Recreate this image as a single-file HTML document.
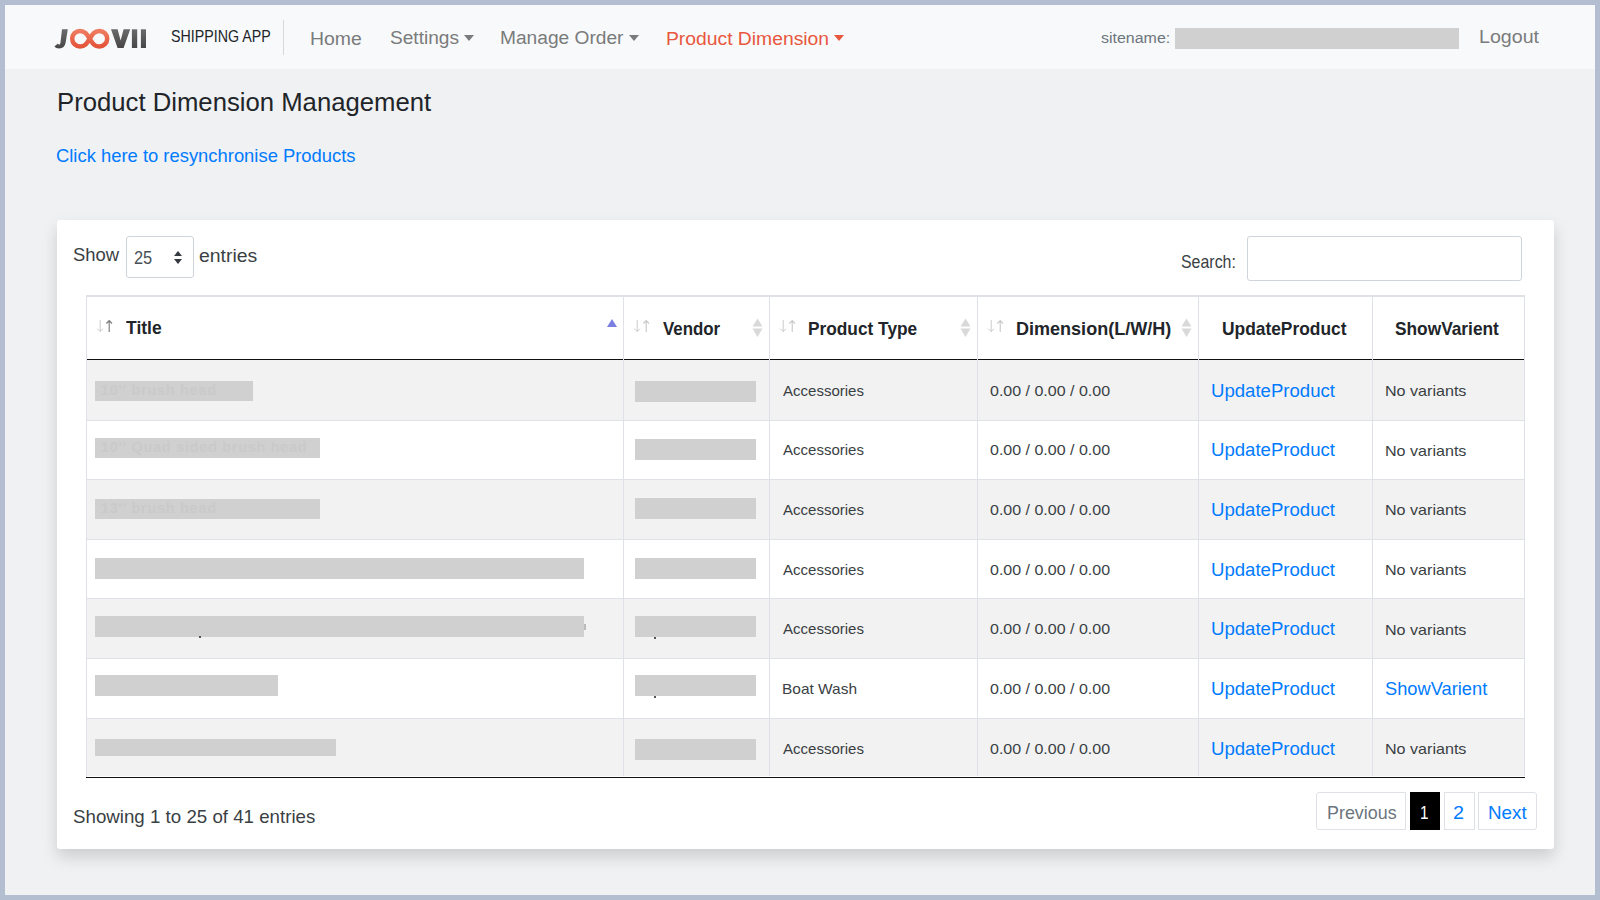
<!DOCTYPE html>
<html><head><meta charset="utf-8"><style>
html,body{margin:0;padding:0;}
body{width:1600px;height:900px;position:relative;overflow:hidden;background:#b3bfd0;font-family:"Liberation Sans",sans-serif;}
.abs{position:absolute;}
.t{position:absolute;white-space:nowrap;line-height:1;transform-origin:0 0;}
.red{background:#d0d0d0;}
.faint{position:absolute;left:6px;top:1px;font-weight:bold;font-size:14.5px;letter-spacing:0.7px;line-height:17px;color:#cacaca;white-space:nowrap;}
</style></head><body>
<div class="abs" style="left:5px;top:5px;width:1590px;height:890px;background:#f0f1f3"></div>
<div class="abs" style="left:5px;top:5px;width:1590px;height:64px;background:#f8f9fa"></div>
<svg class="abs" style="left:50px;top:24px" width="100" height="30" viewBox="0 0 100 30">
<defs>
<linearGradient id="gg" x1="0" y1="0" x2="0" y2="1"><stop offset="0" stop-color="#6a6a6a"/><stop offset="1" stop-color="#474747"/></linearGradient>
<linearGradient id="og" x1="0" y1="0" x2="0" y2="1"><stop offset="0" stop-color="#ee7b60"/><stop offset="1" stop-color="#e4553a"/></linearGradient>
</defs>
<path fill="url(#gg)" d="M12,5.3 L17.8,5.3 L15.6,18.8 Q14.6,24.4 9.2,24.4 Q5.6,24.4 4.4,22.4 L7.6,19.8 Q8.4,20.9 9.6,20.5 Q10.2,20.2 10.5,18.4 Z"/>
<path fill="none" stroke="url(#og)" stroke-width="4.5" d="M30,6.9 C35,6.9 37,10 39.7,14.7 C42.4,19.4 44.4,22.5 49.4,22.5 A7.8,7.8 0 0 0 49.4,6.9 C44.4,6.9 42.4,10 39.7,14.7 C37,19.4 35,22.5 30,22.5 A7.8,7.8 0 0 1 30,6.9 Z"/>
<polygon fill="url(#gg)" points="61,5.3 67.6,5.3 70.6,16.5 73.6,5.3 80.2,5.3 73.6,24 67.6,24"/>
<rect fill="url(#gg)" x="81.9" y="5.3" width="5.3" height="18.7"/>
<rect fill="url(#gg)" x="90.9" y="5.3" width="5.1" height="18.7"/>
</svg>
<div class="abs" style="left:283px;top:20px;width:1px;height:35px;background:#d6d8da"></div>
<div class="abs caret" style="left:463.5px;top:34.5px;width:0;height:0;border-left:5px solid transparent;border-right:5px solid transparent;border-top:6px solid #7a7b7c"></div>
<div class="abs caret" style="left:629px;top:34.5px;width:0;height:0;border-left:5px solid transparent;border-right:5px solid transparent;border-top:6px solid #7a7b7c"></div>
<div class="abs caret" style="left:834px;top:34.5px;width:0;height:0;border-left:5px solid transparent;border-right:5px solid transparent;border-top:6px solid #e8573e"></div>

<div class="abs" style="left:57px;top:220px;width:1497px;height:629px;background:#fff;border-radius:3px;box-shadow:0 8px 16px rgba(0,0,0,.15)"></div>
<div class="abs" style="left:126px;top:236px;width:66px;height:40px;border:1px solid #ced4da;border-radius:3px;background:#fff"></div>
<div class="abs" style="left:173.5px;top:251.1px;width:0;height:0;border-left:4.6px solid transparent;border-right:4.6px solid transparent;border-bottom:5.1px solid #343a40"></div>
<div class="abs" style="left:173.5px;top:258.6px;width:0;height:0;border-left:4.6px solid transparent;border-right:4.6px solid transparent;border-top:5.1px solid #343a40"></div>
<div class="abs" style="left:1247px;top:236px;width:273px;height:43px;border:1px solid #ced4da;border-radius:3px;background:#fff"></div>

<div class="abs" style="left:86px;top:295px;width:1439px;height:2px;background:#dee2e6"></div>
<div class="abs" style="left:87px;top:360px;width:1437px;height:60px;background:#f2f2f2"></div>
<div class="abs" style="left:87px;top:421px;width:1437px;height:58px;background:#ffffff"></div>
<div class="abs" style="left:87px;top:480px;width:1437px;height:59px;background:#f2f2f2"></div>
<div class="abs" style="left:87px;top:540px;width:1437px;height:58px;background:#ffffff"></div>
<div class="abs" style="left:87px;top:599px;width:1437px;height:59px;background:#f2f2f2"></div>
<div class="abs" style="left:87px;top:659px;width:1437px;height:59px;background:#ffffff"></div>
<div class="abs" style="left:87px;top:719px;width:1437px;height:57px;background:#f2f2f2"></div>
<div class="abs" style="left:87px;top:420px;width:1437px;height:1px;background:#dee2e6"></div>
<div class="abs" style="left:87px;top:479px;width:1437px;height:1px;background:#dee2e6"></div>
<div class="abs" style="left:87px;top:539px;width:1437px;height:1px;background:#dee2e6"></div>
<div class="abs" style="left:87px;top:598px;width:1437px;height:1px;background:#dee2e6"></div>
<div class="abs" style="left:87px;top:658px;width:1437px;height:1px;background:#dee2e6"></div>
<div class="abs" style="left:87px;top:718px;width:1437px;height:1px;background:#dee2e6"></div>
<div class="abs" style="left:87px;top:359px;width:1438px;height:1px;background:#111"></div>
<div class="abs" style="left:86px;top:295px;width:1px;height:482px;background:#dee2e6"></div>
<div class="abs" style="left:623px;top:297px;width:1px;height:479px;background:#dee2e6"></div>
<div class="abs" style="left:769px;top:297px;width:1px;height:479px;background:#dee2e6"></div>
<div class="abs" style="left:977px;top:297px;width:1px;height:479px;background:#dee2e6"></div>
<div class="abs" style="left:1198px;top:297px;width:1px;height:479px;background:#dee2e6"></div>
<div class="abs" style="left:1372px;top:297px;width:1px;height:479px;background:#dee2e6"></div>
<div class="abs" style="left:1524px;top:297px;width:1px;height:479px;background:#dee2e6"></div>
<div class="abs" style="left:86px;top:777px;width:1439px;height:1px;background:#111"></div>
<div class="abs red" style="left:95px;top:381px;width:158px;height:20px;overflow:hidden"><span class="faint">10'' brush head</span></div>
<div class="abs red" style="left:95px;top:438px;width:225px;height:20px;overflow:hidden"><span class="faint">10'' Quad sided brush head</span></div>
<div class="abs red" style="left:95px;top:499px;width:225px;height:20px;overflow:hidden"><span class="faint">13'' brush head</span></div>
<div class="abs red" style="left:95px;top:558px;width:489px;height:21px;overflow:hidden"><span class="faint"></span></div>
<div class="abs red" style="left:95px;top:616px;width:489px;height:21px;overflow:hidden"><span class="faint"></span></div>
<div class="abs red" style="left:95px;top:675px;width:183px;height:21px;overflow:hidden"><span class="faint"></span></div>
<div class="abs red" style="left:95px;top:739px;width:241px;height:17px;overflow:hidden"><span class="faint"></span></div>
<div class="abs red" style="left:635px;top:381px;width:121px;height:21px"></div>
<div class="abs red" style="left:635px;top:439px;width:121px;height:21px"></div>
<div class="abs red" style="left:635px;top:498px;width:121px;height:21px"></div>
<div class="abs red" style="left:635px;top:558px;width:121px;height:21px"></div>
<div class="abs red" style="left:635px;top:616px;width:121px;height:21px"></div>
<div class="abs red" style="left:635px;top:675px;width:121px;height:21px"></div>
<div class="abs red" style="left:635px;top:739px;width:121px;height:21px"></div>
<div class="abs red" style="left:1175px;top:28px;width:284px;height:21px"></div>
<div class="abs" style="left:199px;top:636px;width:2px;height:1.5px;background:#555"></div>
<div class="abs" style="left:654px;top:637px;width:1.5px;height:1.5px;background:#555"></div>
<div class="abs" style="left:654px;top:696px;width:1.5px;height:1.5px;background:#555"></div>
<div class="abs" style="left:584px;top:624px;width:1.5px;height:6px;background:#bbb"></div>

<div class="abs" style="left:606.7px;top:318.6px;width:0;height:0;border-left:5.2px solid transparent;border-right:5.2px solid transparent;border-bottom:8.8px solid #7b7fe0"></div>
<svg class="abs" style="left:96.3px;top:319px" width="18" height="14" viewBox="0 0 18 14">
<path d="M4.2,1 V12.5 M1.4,9.7 L4.2,12.6 L7,9.7" stroke="#c8c8c8" stroke-width="0.95" fill="none"/>
<path d="M13.2,13 V1.6 M10.4,4.5 L13.2,1.5 L16,4.5" stroke="#777" stroke-width="1.1" fill="none"/>
</svg>
<svg class="abs" style="left:633.2px;top:319px" width="18" height="14" viewBox="0 0 18 14">
<path d="M4.2,1 V12.5 M1.4,9.7 L4.2,12.6 L7,9.7" stroke="#c8c8c8" stroke-width="0.95" fill="none"/>
<path d="M13.2,13 V1.6 M10.4,4.5 L13.2,1.5 L16,4.5" stroke="#c8c8c8" stroke-width="1.1" fill="none"/>
</svg>
<svg class="abs" style="left:778.6px;top:319px" width="18" height="14" viewBox="0 0 18 14">
<path d="M4.2,1 V12.5 M1.4,9.7 L4.2,12.6 L7,9.7" stroke="#c8c8c8" stroke-width="0.95" fill="none"/>
<path d="M13.2,13 V1.6 M10.4,4.5 L13.2,1.5 L16,4.5" stroke="#c8c8c8" stroke-width="1.1" fill="none"/>
</svg>
<svg class="abs" style="left:987.2px;top:319px" width="18" height="14" viewBox="0 0 18 14">
<path d="M4.2,1 V12.5 M1.4,9.7 L4.2,12.6 L7,9.7" stroke="#c8c8c8" stroke-width="0.95" fill="none"/>
<path d="M13.2,13 V1.6 M10.4,4.5 L13.2,1.5 L16,4.5" stroke="#c8c8c8" stroke-width="1.1" fill="none"/>
</svg>
<svg class="abs" style="left:751.8px;top:318px" width="11" height="20" viewBox="0 0 11 20">
<path d="M5.5,0.5 L10.5,8.6 L0.5,8.6 Z M0.5,10.6 L10.5,10.6 L5.5,19 Z" fill="#d9d9d9"/></svg>
<svg class="abs" style="left:959.6px;top:318px" width="11" height="20" viewBox="0 0 11 20">
<path d="M5.5,0.5 L10.5,8.6 L0.5,8.6 Z M0.5,10.6 L10.5,10.6 L5.5,19 Z" fill="#d9d9d9"/></svg>
<svg class="abs" style="left:1180.6px;top:318px" width="11" height="20" viewBox="0 0 11 20">
<path d="M5.5,0.5 L10.5,8.6 L0.5,8.6 Z M0.5,10.6 L10.5,10.6 L5.5,19 Z" fill="#d9d9d9"/></svg>

<div class="abs" style="left:1316px;top:792px;width:88px;height:36px;border:1px solid #dee2e6;border-radius:3px 0 0 3px;background:#fff"></div>
<div class="abs" style="left:1410px;top:792px;width:30px;height:38px;background:#000"></div>
<div class="abs" style="left:1444px;top:792px;width:29px;height:36px;border:1px solid #dee2e6;background:#fff"></div>
<div class="abs" style="left:1478px;top:792px;width:57px;height:36px;border:1px solid #dee2e6;border-radius:0 3px 3px 0;background:#fff"></div>
<div class="t" id="ship" style="left:170.70px;top:28.71px;font-size:15.70px;font-weight:normal;color:#212529;transform:scaleX(0.9074)">SHIPPING APP</div>
<div class="t" id="home" style="left:309.70px;top:30.89px;font-size:17.95px;font-weight:normal;color:#7a7b7c;transform:scaleX(1.0829)">Home</div>
<div class="t" id="settings" style="left:389.70px;top:30.45px;font-size:17.95px;font-weight:normal;color:#7a7b7c;transform:scaleX(1.0651)">Settings</div>
<div class="t" id="manage" style="left:499.95px;top:30.45px;font-size:17.95px;font-weight:normal;color:#7a7b7c;transform:scaleX(1.0676)">Manage Order</div>
<div class="t" id="pdim" style="left:666.20px;top:30.89px;font-size:17.95px;font-weight:normal;color:#e8573e;transform:scaleX(1.0759)">Product Dimension</div>
<div class="t" id="sitename" style="left:1100.70px;top:30.97px;font-size:14.53px;font-weight:normal;color:#6c757d;transform:scaleX(1.1000)">sitename:</div>
<div class="t" id="logout" style="left:1478.95px;top:28.77px;font-size:17.59px;font-weight:normal;color:#7a7b7c;transform:scaleX(1.1174)">Logout</div>
<div class="t" id="h1" style="left:56.70px;top:90.10px;font-size:25.22px;font-weight:normal;color:#212529;transform:scaleX(1.0189)">Product Dimension Management</div>
<div class="t" id="link" style="left:55.70px;top:147.74px;font-size:17.88px;font-weight:normal;color:#007bff;transform:scaleX(1.0300)">Click here to resynchronise Products</div>
<div class="t" id="show" style="left:73.40px;top:245.48px;font-size:19.04px;font-weight:normal;color:#3a3f44;transform:scaleX(0.9687)">Show</div>
<div class="t" id="n25" style="left:133.70px;top:250.13px;font-size:17.44px;font-weight:normal;color:#495057;transform:scaleX(0.9396)">25</div>
<div class="t" id="entries" style="left:199.30px;top:245.56px;font-size:19.19px;font-weight:normal;color:#3a3f44;transform:scaleX(1.0126)">entries</div>
<div class="t" id="search" style="left:1181.20px;top:252.98px;font-size:18.02px;font-weight:normal;color:#3a3f44;transform:scaleX(0.8839)">Search:</div>
<div class="t" id="th1" style="left:125.70px;top:319.40px;font-size:18.75px;font-weight:bold;color:#212529;transform:scaleX(0.9341)">Title</div>
<div class="t" id="th2" style="left:662.70px;top:320.41px;font-size:18.46px;font-weight:bold;color:#212529;transform:scaleX(0.9146)">Vendor</div>
<div class="t" id="th3" style="left:807.70px;top:321.33px;font-size:17.73px;font-weight:bold;color:#212529;transform:scaleX(0.9755)">Product Type</div>
<div class="t" id="th4" style="left:1015.70px;top:320.06px;font-size:18.17px;font-weight:bold;color:#212529;transform:scaleX(0.9929)">Dimension(L/W/H)</div>
<div class="t" id="th5" style="left:1222.20px;top:320.86px;font-size:17.66px;font-weight:bold;color:#212529;transform:scaleX(0.9833)">UpdateProduct</div>
<div class="t" id="th6" style="left:1395.20px;top:321.14px;font-size:17.66px;font-weight:bold;color:#212529;transform:scaleX(0.9800)">ShowVarient</div>
<div class="t" id="r0pt" style="left:782.70px;top:383.60px;font-size:14.97px;font-weight:normal;color:#3a3f44;transform:scaleX(1.0037)">Accessories</div>
<div class="t" id="r0dim" style="left:990.20px;top:383.58px;font-size:14.97px;font-weight:normal;color:#3a3f44;transform:scaleX(1.0688)">0.00 / 0.00 / 0.00</div>
<div class="t" id="r0up" style="left:1211.20px;top:381.74px;font-size:18.02px;font-weight:normal;color:#007bff;transform:scaleX(1.0312)">UpdateProduct</div>
<div class="t" id="r0sv" style="left:1385.10px;top:383.20px;font-size:15.12px;font-weight:normal;color:#3a3f44;transform:scaleX(1.0653)">No variants</div>
<div class="t" id="r1pt" style="left:782.70px;top:443.35px;font-size:14.97px;font-weight:normal;color:#3a3f44;transform:scaleX(1.0037)">Accessories</div>
<div class="t" id="r1dim" style="left:990.20px;top:443.33px;font-size:14.97px;font-weight:normal;color:#3a3f44;transform:scaleX(1.0688)">0.00 / 0.00 / 0.00</div>
<div class="t" id="r1up" style="left:1211.20px;top:441.29px;font-size:18.02px;font-weight:normal;color:#007bff;transform:scaleX(1.0312)">UpdateProduct</div>
<div class="t" id="r1sv" style="left:1385.10px;top:442.54px;font-size:15.12px;font-weight:normal;color:#3a3f44;transform:scaleX(1.0653)">No variants</div>
<div class="t" id="r2pt" style="left:782.70px;top:502.90px;font-size:14.97px;font-weight:normal;color:#3a3f44;transform:scaleX(1.0037)">Accessories</div>
<div class="t" id="r2dim" style="left:990.20px;top:503.08px;font-size:14.97px;font-weight:normal;color:#3a3f44;transform:scaleX(1.0688)">0.00 / 0.00 / 0.00</div>
<div class="t" id="r2up" style="left:1211.20px;top:501.03px;font-size:18.02px;font-weight:normal;color:#007bff;transform:scaleX(1.0312)">UpdateProduct</div>
<div class="t" id="r2sv" style="left:1385.10px;top:501.88px;font-size:15.12px;font-weight:normal;color:#3a3f44;transform:scaleX(1.0653)">No variants</div>
<div class="t" id="r3pt" style="left:782.70px;top:562.64px;font-size:14.97px;font-weight:normal;color:#3a3f44;transform:scaleX(1.0037)">Accessories</div>
<div class="t" id="r3dim" style="left:990.20px;top:562.62px;font-size:14.97px;font-weight:normal;color:#3a3f44;transform:scaleX(1.0688)">0.00 / 0.00 / 0.00</div>
<div class="t" id="r3up" style="left:1211.20px;top:560.78px;font-size:18.02px;font-weight:normal;color:#007bff;transform:scaleX(1.0312)">UpdateProduct</div>
<div class="t" id="r3sv" style="left:1385.10px;top:562.22px;font-size:15.12px;font-weight:normal;color:#3a3f44;transform:scaleX(1.0653)">No variants</div>
<div class="t" id="r4pt" style="left:782.70px;top:622.39px;font-size:14.97px;font-weight:normal;color:#3a3f44;transform:scaleX(1.0037)">Accessories</div>
<div class="t" id="r4dim" style="left:990.20px;top:622.37px;font-size:14.97px;font-weight:normal;color:#3a3f44;transform:scaleX(1.0688)">0.00 / 0.00 / 0.00</div>
<div class="t" id="r4up" style="left:1211.20px;top:620.32px;font-size:18.02px;font-weight:normal;color:#007bff;transform:scaleX(1.0312)">UpdateProduct</div>
<div class="t" id="r4sv" style="left:1385.10px;top:621.56px;font-size:15.12px;font-weight:normal;color:#3a3f44;transform:scaleX(1.0653)">No variants</div>
<div class="t" id="r5pt" style="left:782.20px;top:681.93px;font-size:14.97px;font-weight:normal;color:#3a3f44;transform:scaleX(1.0324)">Boat Wash</div>
<div class="t" id="r5dim" style="left:990.20px;top:682.11px;font-size:14.97px;font-weight:normal;color:#3a3f44;transform:scaleX(1.0688)">0.00 / 0.00 / 0.00</div>
<div class="t" id="r5up" style="left:1211.20px;top:680.07px;font-size:18.02px;font-weight:normal;color:#007bff;transform:scaleX(1.0312)">UpdateProduct</div>
<div class="t" id="r5sv" style="left:1385.10px;top:680.24px;font-size:18.02px;font-weight:normal;color:#007bff;transform:scaleX(1.0143)">ShowVarient</div>
<div class="t" id="r6pt" style="left:782.70px;top:741.68px;font-size:14.97px;font-weight:normal;color:#3a3f44;transform:scaleX(1.0037)">Accessories</div>
<div class="t" id="r6dim" style="left:990.20px;top:741.66px;font-size:14.97px;font-weight:normal;color:#3a3f44;transform:scaleX(1.0688)">0.00 / 0.00 / 0.00</div>
<div class="t" id="r6up" style="left:1211.20px;top:739.82px;font-size:18.02px;font-weight:normal;color:#007bff;transform:scaleX(1.0312)">UpdateProduct</div>
<div class="t" id="r6sv" style="left:1385.10px;top:741.24px;font-size:15.12px;font-weight:normal;color:#3a3f44;transform:scaleX(1.0653)">No variants</div>
<div class="t" id="showing" style="left:72.70px;top:808.47px;font-size:18.31px;font-weight:normal;color:#3a3f44;transform:scaleX(1.0226)">Showing 1 to 25 of 41 entries</div>
<div class="t" id="prev" style="left:1326.70px;top:804.41px;font-size:18.46px;font-weight:normal;color:#6c757d;transform:scaleX(0.9701)">Previous</div>
<div class="t" id="p1" style="left:1420.30px;top:804.41px;font-size:18.46px;font-weight:normal;color:#ffffff;transform:scaleX(0.8261)">1</div>
<div class="t" id="p2" style="left:1452.80px;top:804.41px;font-size:18.46px;font-weight:normal;color:#007bff;transform:scaleX(1.0758)">2</div>
<div class="t" id="next" style="left:1488.20px;top:804.41px;font-size:18.46px;font-weight:normal;color:#007bff;transform:scaleX(1.0196)">Next</div>
</body></html>
